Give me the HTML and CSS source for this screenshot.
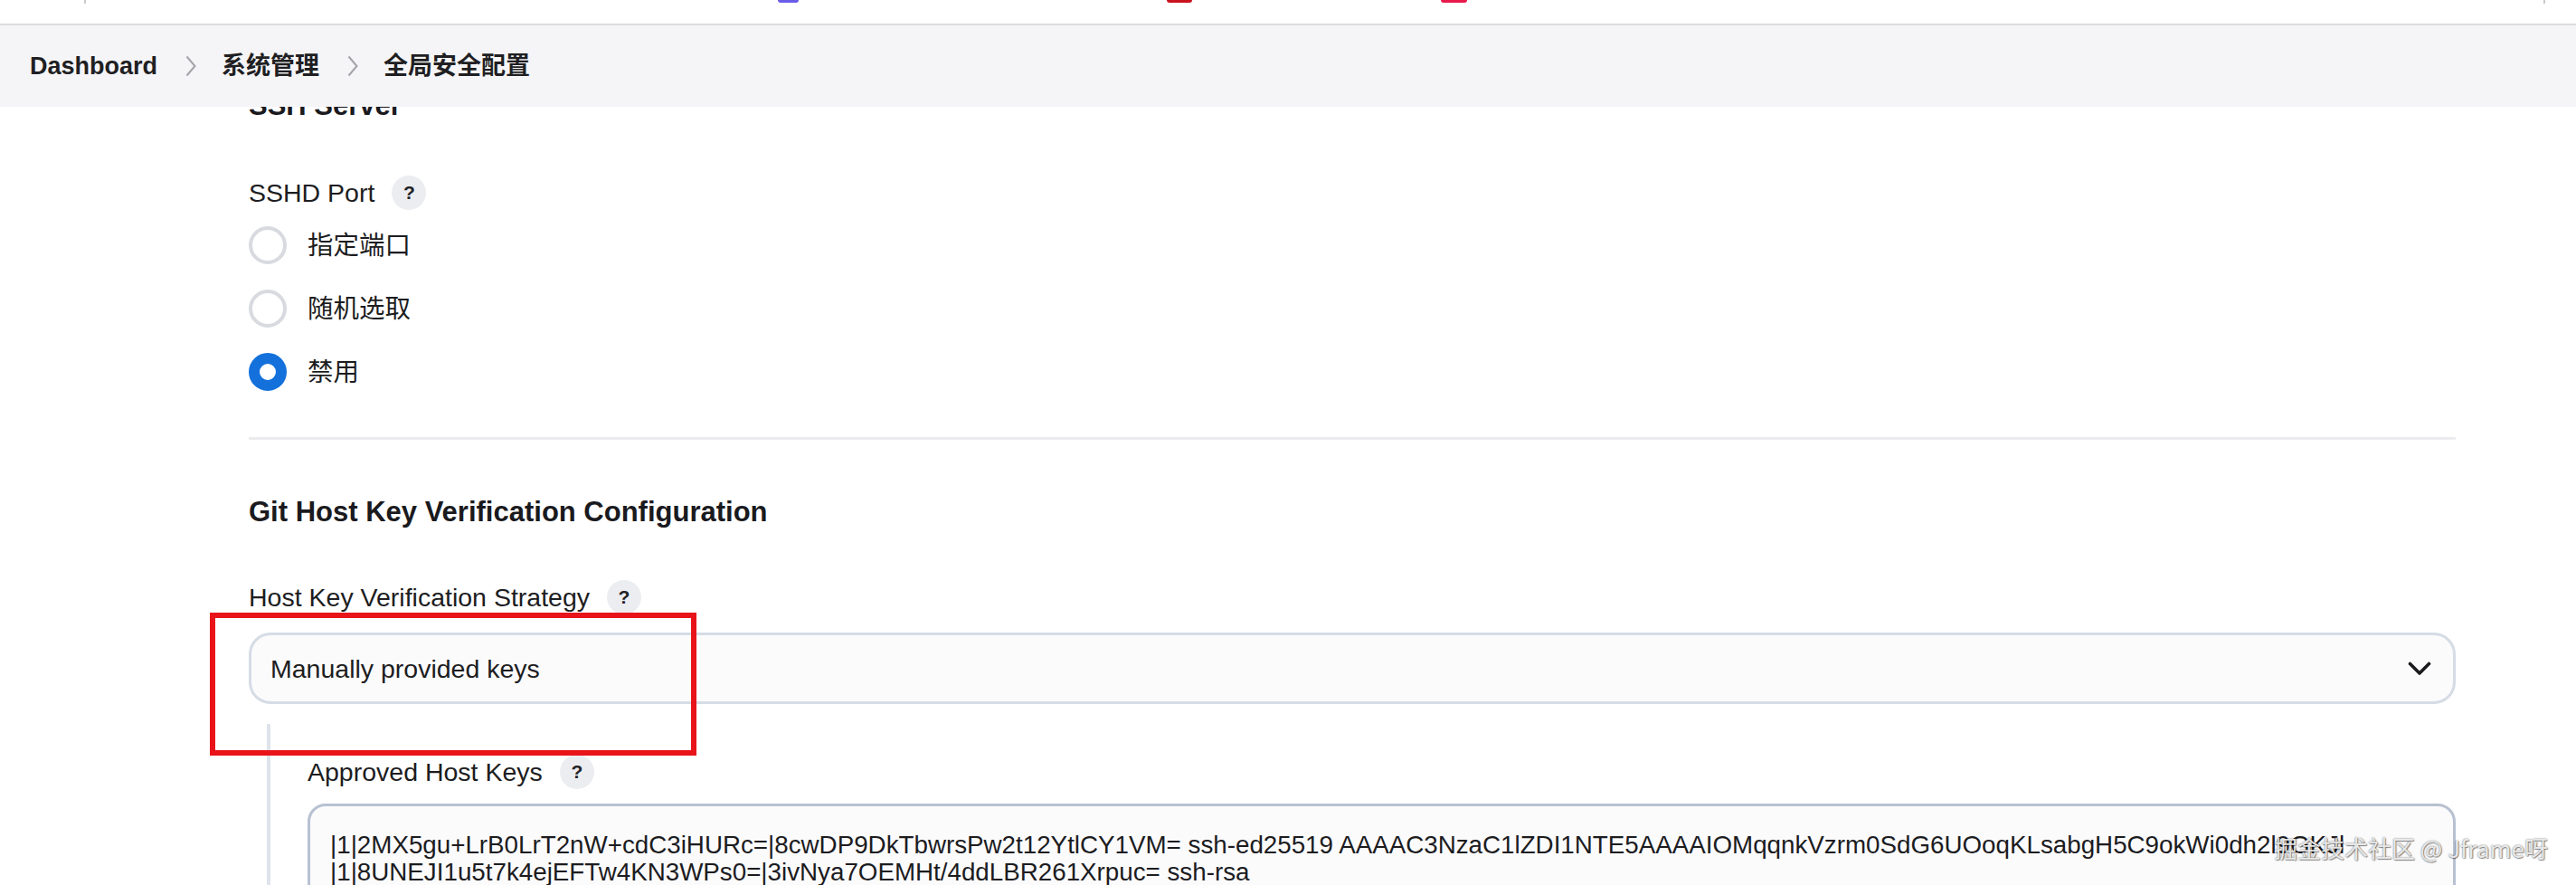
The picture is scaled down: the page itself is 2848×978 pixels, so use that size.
FILE: index.html
```html
<!doctype html>
<html lang="zh-CN">
<head>
	<meta charset="UTF-8">
	<title>全局安全配置</title>
	<link rel="stylesheet" href="styles.css">
</head>
<body>
	<div class="top-strip">
		<span class="tab-edge tab-edge-line tab-edge1"></span>
		<span class="tab-edge tab-edge2"></span>
		<span class="tab-edge tab-edge3"></span>
		<span class="tab-edge tab-edge4"></span>
		<span class="tab-edge tab-edge-line tab-edge5"></span>
	</div>

	<div class="crumbs">
		<a class="crumb" href="#">Dashboard</a>
		<svg class="crumb-sep" viewBox="0 0 12 24"><path d="M1.5 1.5 L10.5 12 L1.5 22.5"/></svg>
		<a class="crumb" href="#">系统管理</a>
		<svg class="crumb-sep" viewBox="0 0 12 24"><path d="M1.5 1.5 L10.5 12 L1.5 22.5"/></svg>
		<a class="crumb" href="#">全局安全配置</a>
	</div>

	<div class="main">
		<h2 class="section-title">SSH Server</h2>

		<div class="field field-sshd">
			<div class="field-label">SSHD Port <span class="help">?</span></div>
			<div class="radio-list">
				<label class="radio"><input type="radio" name="sshd"><span>指定端口</span></label>
				<label class="radio"><input type="radio" name="sshd"><span>随机选取</span></label>
				<label class="radio"><input type="radio" name="sshd" checked><span>禁用</span></label>
			</div>
		</div>

		<hr class="section-rule">

		<h2 class="section-title section-git">Git Host Key Verification Configuration</h2>

		<div class="field field-strategy">
			<div class="field-label">Host Key Verification Strategy <span class="help">?</span></div>
			<div class="select">
				<span>Manually provided keys</span>
				<svg class="select-arrow" viewBox="0 0 26 16"><path d="M2.5 2.5 L13 13 L23.5 2.5"/></svg>
			</div>
		</div>

		<div class="nested">
			<div class="field-label">Approved Host Keys <span class="help">?</span></div>
			<textarea class="keys" wrap="off">|1|2MX5gu+LrB0LrT2nW+cdC3iHURc=|8cwDP9DkTbwrsPw2t12YtlCY1VM= ssh-ed25519 AAAAC3NzaC1lZDI1NTE5AAAAIOMqqnkVzrm0SdG6UOoqKLsabgH5C9okWi0dh2l9GKJl
|1|8UNEJI1u5t7k4ejEFTw4KN3WPs0=|3ivNya7OEMHt/4ddLBR261Xrpuc= ssh-rsa</textarea>
		</div>
	</div>

	<div class="mark-box"></div>
	<div class="watermark">掘金技术社区 @ Jframe呀</div>
</body>
</html>
```

FILE: styles.css
```css
/* base */
html,body{margin:0;padding:0;height:100%;overflow:hidden;}
body{position:relative;background:#fff;color:#1d1d21;font:28.5px/40px "Liberation Sans", "Noto Sans CJK SC", sans-serif;}
a{text-decoration:none;color:inherit;}

/* browser strip */
.top-strip{display:flex;align-items:flex-start;height:26px;border-bottom:2px solid #dcdcde;background:#fff;}
.tab-edge{display:block;height:3px;border-radius:0 0 12px 12px;}
.tab-edge-line{width:2px;height:4px;border-radius:0;background:#c9cad0;}
.tab-edge1{margin-left:93px;}
.tab-edge2{margin-left:765px;width:23px;background:#6a5be8;}
.tab-edge3{margin-left:407px;width:28px;background:#c8121d;}
.tab-edge4{margin-left:275px;width:29px;background:#e8194b;}
.tab-edge5{margin-left:1190px;}

/* breadcrumbs */
.crumbs{position:relative;z-index:1;display:flex;align-items:center;height:90px;padding-left:33px;background:#f5f5f7;font-size:27px;font-weight:bold;}
.crumb{color:#1f1f23;}
.crumb-sep{width:12px;height:24px;margin:0 28px 0 31px;fill:none;stroke:#a3a3a8;stroke-width:2;}

/* content */
.main{margin-top:-20px;padding:0 133px 0 275px;}
.section-title{margin:0;font-size:31px;line-height:38px;font-weight:bold;color:#1a1a1e;}
.section-git{margin-top:61px;}
.section-rule{height:3px;margin:51px 0 0;border:0;background:#ececef;}

.field-sshd{margin-top:57px;}
.field-strategy{margin-top:55px;}
.field-label{display:flex;align-items:center;gap:19px;height:40px;}
.help{display:inline-flex;align-items:center;justify-content:center;width:38px;height:38px;border-radius:50%;background:#ecedf0;color:#222226;font-size:21px;font-weight:bold;}

.radio-list{display:flex;flex-direction:column;gap:28px;margin-top:17px;}
.radio{display:flex;align-items:center;gap:23px;height:42px;}
.radio input{appearance:none;-webkit-appearance:none;box-sizing:border-box;width:42px;height:42px;margin:0;border:4px solid #d8dadf;border-radius:50%;background:#fff;}
.radio input:checked{border:12px solid #1471dc;}

.select{display:flex;align-items:center;justify-content:space-between;box-sizing:border-box;height:79px;margin-top:19px;padding:0 24px 0 21px;border:3px solid #d6dce5;border-radius:24px;background:#fbfbfc;}
.select-arrow{width:26px;height:16px;fill:none;stroke:#1b1b1e;stroke-width:3.6;stroke-linecap:round;stroke-linejoin:round;}

.nested{margin:22px 0 0 20px;padding:33px 0 0 41px;border-left:4px solid #dfe3ea;}
.keys{display:block;box-sizing:border-box;width:100%;height:240px;margin-top:15px;padding:28px 22px;border:3px solid #b8c1d1;border-radius:20px;background:#fbfbfc;color:#1c1c1f;font:27.75px/30px "Liberation Sans", "Noto Sans CJK SC", sans-serif;white-space:pre;overflow:hidden;resize:none;outline:none;}

/* annotation + watermark */
.mark-box{position:absolute;left:232px;top:677px;width:538px;height:158px;box-sizing:border-box;border:6px solid #e8141a;}
.watermark{position:absolute;right:31px;bottom:26px;font:26px/30px "Noto Sans CJK SC", "Liberation Sans", sans-serif;color:rgba(240,240,240,.95);text-shadow:0 0 2px rgba(0,0,0,.6), 1px 1px 1px rgba(0,0,0,.35);}
```
